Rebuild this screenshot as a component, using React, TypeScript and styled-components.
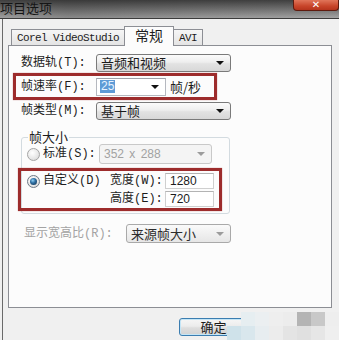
import React from 'react'
import styled, { createGlobalStyle, css } from 'styled-components'

const GlobalStyle = createGlobalStyle`
  html, body {
    margin: 0;
    padding: 0;
    background: #f0f0f0;
    overflow: hidden;
  }
  body {
    font-family: "Liberation Mono", "Noto Sans CJK SC", monospace;
    font-size: 12px;
    color: #1c1c1c;
  }
`

const Window = styled.div`
  position: relative;
  width: 339px;
  height: 340px;
  display: flex;
  flex-direction: column;
  overflow: hidden;
  background: #f0f0f0;
`

const TitleBar = styled.div`
  height: 18px;
  flex-shrink: 0;
  display: flex;
  justify-content: space-between;
  align-items: flex-start;
  background:
    linear-gradient(to bottom, rgba(30, 30, 30, 0.75) 0%, rgba(30, 30, 30, 0) 100%),
    linear-gradient(to right, #a0a0a0 0%, #8a8a8a 20%, #9a9a9a 60%, #a4a4a4 100%);
  border-bottom: 1px solid #3c3c3c;
  overflow: hidden;
`

const Title = styled.span`
  font-family: "Noto Sans CJK SC", sans-serif;
  font-size: 13px;
  line-height: 15px;
  margin-top: 0;
  color: #151515;
`

const CloseButton = styled.div`
  width: 46px;
  height: 11px;
  box-sizing: border-box;
  display: flex;
  justify-content: center;
  align-items: center;
  border: 1px solid #5e1a0e;
  border-top: none;
  border-radius: 0 0 4px 4px;
  background: linear-gradient(to bottom, #e0755a 0%, #c8452a 60%, #b5341c 100%);
  color: #ffffff;
  font-family: "DejaVu Sans", sans-serif;
  font-weight: bold;
  font-size: 10px;
  line-height: 10px;
`

const Body = styled.div`
  flex: 1;
  display: flex;
  flex-direction: column;
  margin-left: 2px;
  border-left: 1px solid #6a6a6a;
  padding-top: 7px;
`

const TabStrip = styled.div`
  display: flex;
  align-items: flex-end;
  margin-left: 8px;
  height: 19px;
  position: relative;
  z-index: 1;
`

const Tab = styled.div<{ $active?: boolean; $mono?: boolean }>`
  box-sizing: border-box;
  height: 16px;
  padding: 0 5px;
  display: flex;
  align-items: center;
  border: 1px solid #8c8e94;
  border-bottom: none;
  margin-right: -1px;
  background: linear-gradient(to bottom, #f6f6f6, #e4e4e4);
  font-size: 12px;
  line-height: 14px;
  ${p => p.$mono && css`
    font-size: 11px;
    letter-spacing: -0.6px;
  `}
  ${p => p.$active && css`
    height: 20px;
    margin-bottom: -1px;
    background: #fcfcfc;
    padding: 0 10px;
    align-items: flex-start;
    padding-top: 1px;
    font-family: "Noto Sans CJK SC", sans-serif;
    font-size: 14px;
  `}
`

const Panel = styled.div`
  box-sizing: border-box;
  height: 263px;
  margin: 0 7px 0 5px;
  border: 1px solid #8c8e94;
  background: #fcfcfc;
  padding: 8px 0 0 12px;
  display: flex;
  flex-direction: column;
`

const Row = styled.div<{ $h?: number }>`
  display: flex;
  align-items: center;
  height: ${p => p.$h ?? 18}px;
`

const Label = styled.span<{ $w?: number; $muted?: boolean }>`
  width: ${p => (p.$w ? `${p.$w}px` : 'auto')};
  flex-shrink: 0;
  white-space: nowrap;
  line-height: 14px;
  color: ${p => (p.$muted ? '#a3a3a3' : '#1c1c1c')};
`

const Highlight = styled.div<{ $left: number; $mt: number; $h: number }>`
  box-sizing: border-box;
  width: 204px;
  height: ${p => p.$h}px;
  margin: ${p => p.$mt}px 0 0 ${p => p.$left}px;
  border: 3px solid #9d2c2c;
  box-shadow: 0 0 1px rgba(157, 44, 44, 0.6);
`

const FrameRateBox = styled(Highlight)`
  display: flex;
  align-items: center;
  padding-left: 5px;
`

const Arrow = styled.span<{ $muted?: boolean }>`
  width: 0;
  height: 0;
  margin-left: auto;
  margin-right: 6px;
  border-left: 4px solid transparent;
  border-right: 4px solid transparent;
  border-top: 4px solid ${p => (p.$muted ? '#9c9c9c' : '#111111')};
`

const Select = styled.div<{ $w: number; $h?: number; $variant?: 'normal' | 'disabled' | 'soft' }>`
  box-sizing: border-box;
  width: ${p => p.$w}px;
  height: ${p => p.$h ?? 18}px;
  display: flex;
  align-items: center;
  padding-left: 4px;
  border: 1px solid #7a7a7a;
  border-radius: 3px;
  background: linear-gradient(to bottom, #fbfbfb 0%, #eeeeee 45%, #e2e2e2 55%, #d8d8d8 100%);
  font-family: "Noto Sans CJK SC", sans-serif;
  font-size: 13px;
  line-height: 14px;
  color: #1a1a1a;
  ${p => p.$variant === 'disabled' && css`
    border-color: #c9c9c9;
    background: #f4f4f4;
    color: #a2a2a2;
    font-family: "Liberation Sans", sans-serif;
    font-size: 12px;
    word-spacing: 2px;
  `}
  ${p => p.$variant === 'soft' && css`
    border-color: #a9a9a9;
    background: linear-gradient(to bottom, #fafafa 0%, #f0f0f0 50%, #e6e6e6 100%);
    color: #2c2c2c;
  `}
`

const Combo = styled.div`
  box-sizing: border-box;
  width: 70px;
  height: 18px;
  display: flex;
  align-items: center;
  padding-left: 3px;
  border: 1px solid #b5b8bf;
  border-top-color: #9ea2aa;
  background: #ffffff;
`

const Selected = styled.span`
  background: #5e9bd6;
  color: #e8f3ff;
  font-family: "Liberation Sans", sans-serif;
  font-size: 12px;
  line-height: 13px;
  padding: 0 1px;
`

const Unit = styled.span`
  margin-left: 4px;
  font-family: "Noto Sans CJK SC", sans-serif;
  font-size: 13px;
`

const Group = styled.fieldset`
  box-sizing: border-box;
  width: 209px;
  margin: 10px 0 0 0;
  padding: 0 0 2px 5px;
  border: 1px solid #d3dbe0;
  border-radius: 3px;
  min-width: 0;
`

const Legend = styled.legend`
  margin-left: 1px;
  padding: 0 1px;
  font-family: "Noto Sans CJK SC", sans-serif;
  font-size: 13px;
  line-height: 14px;
`

const Radio = styled.span<{ $checked?: boolean }>`
  box-sizing: border-box;
  width: 13px;
  height: 13px;
  flex-shrink: 0;
  border-radius: 50%;
  border: 1px solid ${p => (p.$checked ? '#6f7a86' : '#a4a4a4')};
  background: radial-gradient(circle at 40% 35%, #ffffff 0%, #e6e6e6 60%, #cfcfcf 100%);
  display: flex;
  align-items: center;
  justify-content: center;
  margin-right: 3px;
  &::after {
    content: '';
    display: ${p => (p.$checked ? 'block' : 'none')};
    width: 7px;
    height: 7px;
    border-radius: 50%;
    background: radial-gradient(circle at 40% 35%, #8fd0f5 0%, #2f6fa3 40%, #0f2a44 100%);
  }
`

const CustomBox = styled(Highlight)`
  display: grid;
  grid-template-columns: 83px 55px 49px;
  grid-template-rows: 16px 16px;
  row-gap: 2px;
  align-items: center;
  padding: 2px 0 1px 6px;
`

const RadioCell = styled.div`
  display: flex;
  align-items: center;
  align-self: start;
  padding-top: 1px;
`

const Input = styled.div`
  box-sizing: border-box;
  height: 16px;
  display: flex;
  align-items: center;
  padding-left: 4px;
  border: 1px solid #cfcfcf;
  border-top-color: #b3b3b3;
  background: #ffffff;
  font-family: "Liberation Sans", sans-serif;
  font-size: 12px;
`

const Footer = styled.div`
  flex: 1;
  display: flex;
  align-items: flex-start;
  padding: 10px 0 0 176px;
`

const Button = styled.div`
  box-sizing: border-box;
  width: 69px;
  height: 18px;
  display: flex;
  align-items: center;
  justify-content: center;
  border: 1px solid #3b7db0;
  border-radius: 3px;
  box-shadow: inset 0 0 0 1px #c4e5f6;
  background: linear-gradient(to bottom, #f6f6f6 0%, #ececec 45%, #dedede 55%, #d2d2d2 100%);
  font-family: "Noto Sans CJK SC", sans-serif;
  font-size: 13px;
  line-height: 14px;
`

const Watermark = styled.div`
  position: absolute;
  left: 227px;
  top: 312px;
  display: grid;
  grid-template-columns: repeat(8, 14px);
  grid-auto-rows: 14px;
  pointer-events: none;
`

const Cell = styled.div<{ $c: string }>`
  background: ${p => p.$c};
`

const watermark = [
  'transparent', '#e6eef1', '#ebeff1', '#eeeeee', '#ececec', '#b4b4b4', '#c8c8c8', '#eeeeee',
  '#cfe2ea', '#d9e7ed', '#e7edf0', '#ececec', '#e4e4e4', '#e0e0e0', '#e6e6e6', '#efefef',
]

export default function App() {
  return (
    <Window>
      <GlobalStyle />
      <TitleBar>
        <Title>项目选项</Title>
        <CloseButton>✕</CloseButton>
      </TitleBar>
      <Body>
        <TabStrip>
          <Tab $mono>Corel VideoStudio</Tab>
          <Tab $active>常规</Tab>
          <Tab $mono>AVI</Tab>
        </TabStrip>
        <Panel>
          <Row>
            <Label $w={75}>数据轨(T):</Label>
            <Select $w={135}>音频和视频<Arrow /></Select>
          </Row>
          <FrameRateBox $left={-8} $mt={1} $h={27}>
            <Label $w={75}>帧速率(F):</Label>
            <Combo><Selected>25</Selected><Arrow /></Combo>
            <Unit>帧/秒</Unit>
          </FrameRateBox>
          <Row style={{ marginTop: 2 }}>
            <Label $w={75}>帧类型(M):</Label>
            <Select $w={135}>基于帧<Arrow /></Select>
          </Row>
          <Group>
            <Legend>帧大小</Legend>
            <Row $h={20}>
              <Radio />
              <Label $w={56}>标准(S):</Label>
              <Select $w={113} $h={20} $variant="disabled">352 x 288<Arrow $muted /></Select>
            </Row>
            <CustomBox $left={-9} $mt={4} $h={43}>
              <RadioCell>
                <Radio $checked />
                <Label>自定义(D)</Label>
              </RadioCell>
              <Label>宽度(W):</Label>
              <Input>1280</Input>
              <span />
              <Label>高度(E):</Label>
              <Input>720</Input>
            </CustomBox>
          </Group>
          <Row $h={19} style={{ marginTop: 10, paddingLeft: 3 }}>
            <Label $w={102} $muted>显示宽高比(R):</Label>
            <Select $w={105} $h={19} $variant="soft">来源帧大小<Arrow $muted /></Select>
          </Row>
        </Panel>
        <Footer>
          <Button>确定</Button>
        </Footer>
      </Body>
      <Watermark>
        {watermark.map((c, i) => <Cell key={i} $c={c} />)}
      </Watermark>
    </Window>
  )
}
